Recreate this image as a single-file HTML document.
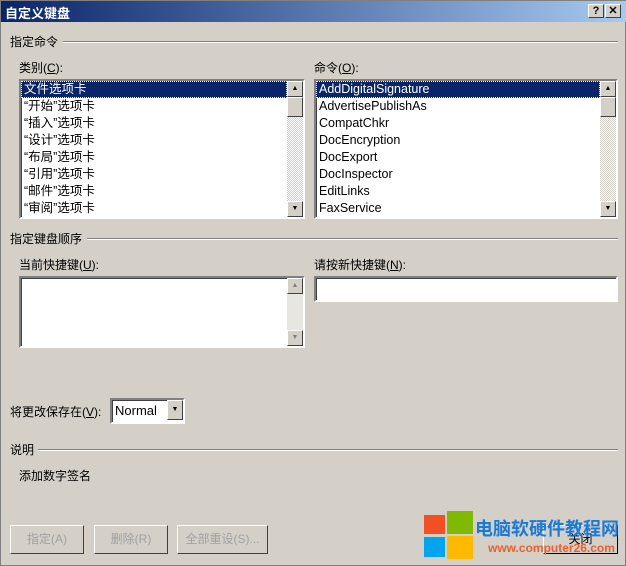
<!DOCTYPE html>
<html><head><meta charset="utf-8"><style>
*{margin:0;padding:0;box-sizing:border-box}
body{width:626px;height:566px;background:#d4d0c8;font-family:"Liberation Sans","Noto Sans CJK SC",sans-serif;font-size:12px;color:#000;position:relative;overflow:hidden;border:1px solid #808080}
.a{position:absolute}
.title{left:0;top:0;width:626px;height:21px;background:linear-gradient(90deg,#0a246a,#a6caf0);color:#fff;font-weight:bold;font-size:13px;padding:2px 4px}
.tb{top:3px;width:16px;height:14px;background:#d4d0c8;border:1px solid;border-color:#fff #404040 #404040 #fff;color:#000;font-size:11px;font-weight:bold;text-align:center;line-height:12px}
.grp{height:1px;border-top:1px solid #808080;border-bottom:1px solid #fff}
.sunk{background:#fff;border:2px solid;border-color:#808080 #fff #fff #808080;box-shadow:inset 1px 1px 0 #404040}
.item{height:17px;line-height:17px;padding-left:3px;font-size:12.5px;white-space:nowrap}
.sel{background:#0a246a;color:#fff;outline:1px dotted #fff;outline-offset:-1px}
.sb{position:absolute;right:0;top:0;bottom:0;width:16px;background:repeating-conic-gradient(#d4d0c8 0 25%,#fff 0 50%) 0 0/2px 2px}
.btn{position:absolute;width:16px;height:16px;background:#d4d0c8;border:1px solid;border-color:#fff #404040 #404040 #fff;font-size:7px;text-align:center;line-height:14px}
.pb{position:absolute;border:1px solid;border-color:#fff #404040 #404040 #fff;background:#d4d0c8;color:#a0a0a0;text-align:center;line-height:26px;height:29px}
</style></head><body>
<div class="a title">自定义键盘</div>
<div class="a tb" style="left:587px">?</div>
<div class="a tb" style="left:604px">✕</div>

<div class="a" style="left:9px;top:32px">指定命令</div>
<div class="a grp" style="left:62px;top:40px;width:555px"></div>
<div class="a" style="left:18px;top:58px">类别(<u>C</u>):</div>
<div class="a" style="left:313px;top:58px">命令(<u>O</u>):</div>

<div class="a sunk" style="left:18px;top:78px;width:286px;height:140px;overflow:hidden">
<div class="sb"><div class="btn" style="top:0">▲</div><div class="btn" style="top:16px;height:20px"></div><div class="btn" style="bottom:0">▼</div></div>
<div class="item sel" style="margin-right:16px">文件选项卡</div>
<div class="item">“开始”选项卡</div><div class="item">“插入”选项卡</div><div class="item">“设计”选项卡</div><div class="item">“布局”选项卡</div><div class="item">“引用”选项卡</div><div class="item">“邮件”选项卡</div><div class="item">“审阅”选项卡</div>
</div>
<div class="a sunk" style="left:313px;top:78px;width:304px;height:140px;overflow:hidden">
<div class="sb"><div class="btn" style="top:0">▲</div><div class="btn" style="top:16px;height:20px"></div><div class="btn" style="bottom:0">▼</div></div>
<div class="item sel" style="margin-right:16px">AddDigitalSignature</div>
<div class="item">AdvertisePublishAs</div><div class="item">CompatChkr</div><div class="item">DocEncryption</div><div class="item">DocExport</div><div class="item">DocInspector</div><div class="item">EditLinks</div><div class="item">FaxService</div>
</div>

<div class="a" style="left:9px;top:229px">指定键盘顺序</div>
<div class="a grp" style="left:86px;top:237px;width:531px"></div>
<div class="a" style="left:18px;top:255px">当前快捷键(<u>U</u>):</div>
<div class="a" style="left:313px;top:255px">请按新快捷键(<u>N</u>):</div>
<div class="a sunk" style="left:18px;top:275px;width:286px;height:72px">
<div class="sb" style="background:#e8e6e0"><div class="btn" style="top:0;color:#808080">▲</div><div class="btn" style="bottom:0;color:#808080">▼</div></div></div>
<div class="a sunk" style="left:313px;top:275px;width:304px;height:26px"></div>

<div class="a" style="left:9px;top:402px">将更改保存在(<u>V</u>):</div>
<div class="a sunk" style="left:109px;top:397px;width:75px;height:26px;padding:3px 0 0 3px;font-size:13px">Normal
<div class="btn" style="right:0;top:0;height:20px;line-height:18px">▼</div></div>

<div class="a" style="left:9px;top:440px">说明</div>
<div class="a grp" style="left:37px;top:448px;width:580px"></div>
<div class="a" style="left:18px;top:466px">添加数字签名</div>

<div class="pb" style="left:9px;top:524px;width:74px">指定(A)</div>
<div class="pb" style="left:93px;top:524px;width:74px">删除(R)</div>
<div class="pb" style="left:176px;top:524px;width:91px">全部重设(S)...</div>
<div class="pb" style="left:542px;top:524px;width:75px;color:#000;border-color:#fff #000 #000 #fff">关闭</div>

<div class="a" style="left:423px;top:514px;width:21px;height:19px;background:#f25022"></div>
<div class="a" style="left:446px;top:510px;width:26px;height:23px;background:#7fba00"></div>
<div class="a" style="left:423px;top:536px;width:21px;height:20px;background:#00a4ef"></div>
<div class="a" style="left:446px;top:535px;width:26px;height:23px;background:#ffb900"></div>
<div class="a" style="left:474px;top:514px;color:#1a7ad8;font-weight:bold;font-size:18px;white-space:nowrap">电脑软硬件教程网</div>
<div class="a" style="left:487px;top:540px;color:#e8602c;font-weight:bold;font-size:12px">www.computer26.com</div>
</body></html>
